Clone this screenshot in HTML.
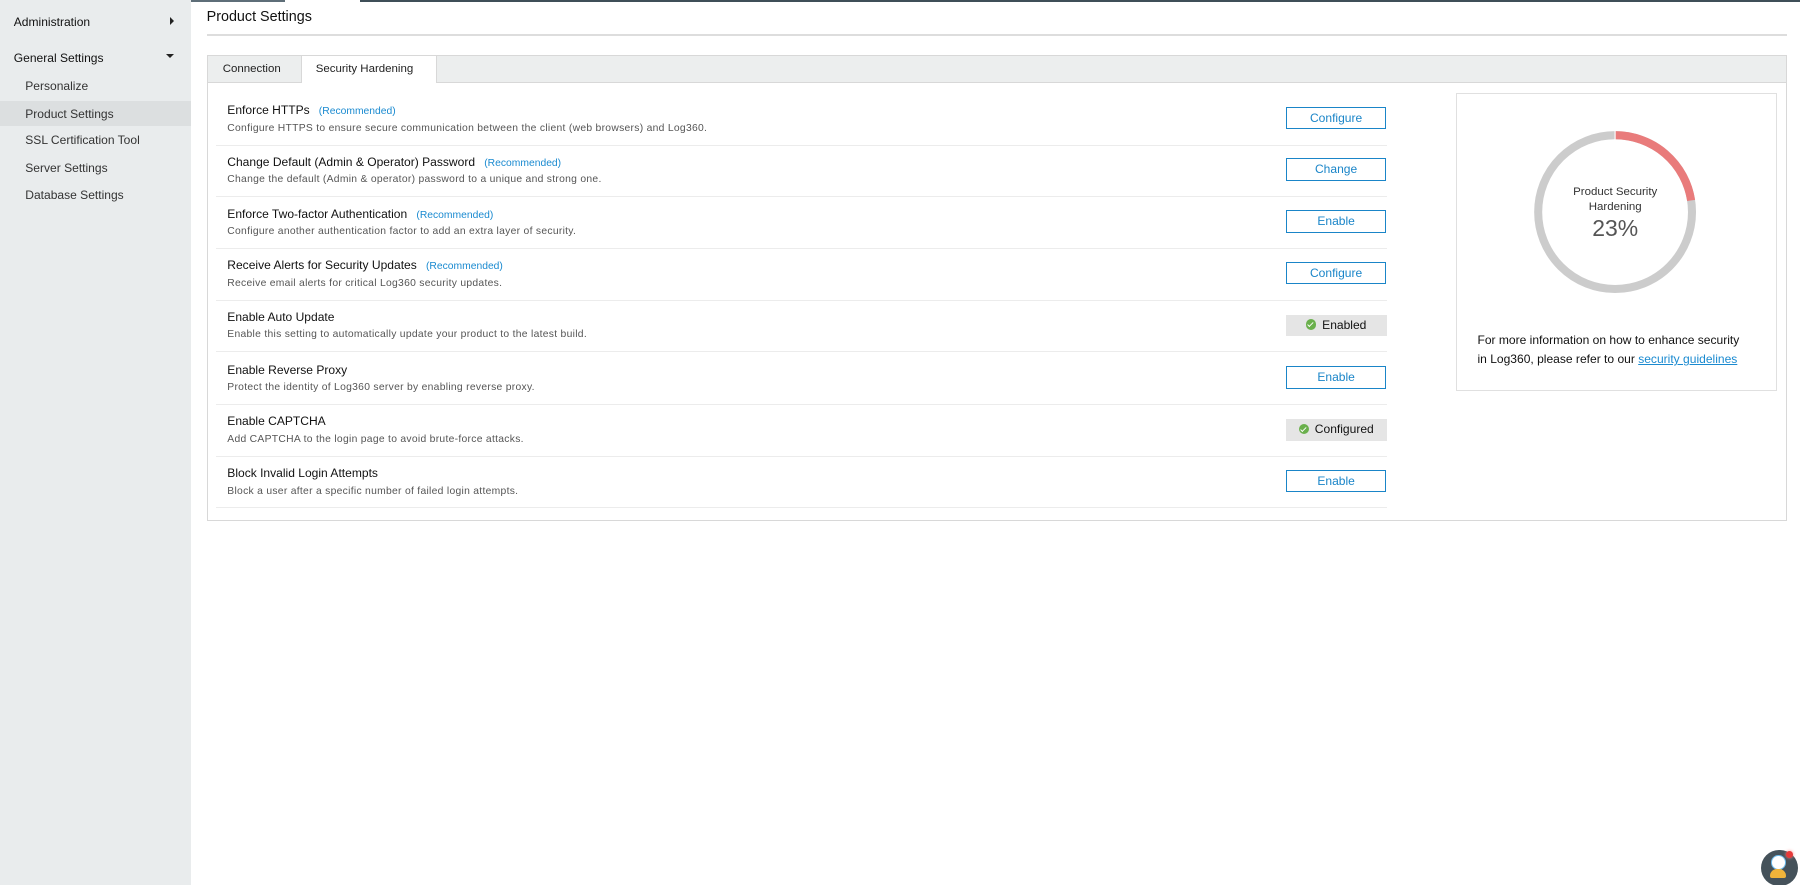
<!DOCTYPE html>
<html><head><meta charset="utf-8"><style>
html,body{margin:0;padding:0;overflow:hidden;background:#fff}
#root{zoom:1.148;width:1568px;height:771px;position:relative;font-family:"Liberation Sans",sans-serif;color:#222}
.a{position:absolute;white-space:nowrap}
.side{position:absolute;left:0;top:0;width:166px;height:771px;background:#e9eced}
.s1{font-size:10.5px;color:#111;left:12px}
.s2{font-size:10.5px;color:#333;left:22px}
.row{position:absolute;left:188px;width:1020px;height:45px;border-bottom:1px solid #ececec}
.t{position:absolute;left:10px;top:9px;font-size:10.5px;color:#111;white-space:nowrap}
.t span{color:#1a8ad0;font-size:9px;margin-left:8px}
.d{position:absolute;left:10px;top:26px;font-size:9px;color:#555;letter-spacing:.25px;white-space:nowrap}
.btn{position:absolute;left:932px;top:12px;width:86px;height:18px;border:1px solid #1a85c8;color:#1a85c8;font-size:10.5px;text-align:center;line-height:18px;background:#fff}
.st{position:absolute;left:932px;top:13px;width:88px;height:19px;background:#e5e5e5;font-size:10.5px;color:#111;text-align:center;line-height:19px}
.ck{display:inline-block;width:9px;height:9px;border-radius:50%;background:#6ab04c;vertical-align:-1px;margin-right:5px;position:relative}
.ck:after{content:"";position:absolute;left:2.5px;top:1.5px;width:2px;height:4px;border:solid #fff;border-width:0 1.3px 1.3px 0;transform:rotate(45deg)}
</style></head><body><div id="root">
<div class="a" style="left:0;top:0;width:248px;height:2px;background:#5e6e78"></div>
<div class="a" style="left:314px;top:0;width:1254px;height:2px;background:#3f4f58"></div>
<div class="side"></div>
<div class="a s1" style="top:13px">Administration</div>
<div class="a" style="left:148px;top:15px;width:0;height:0;border-left:4px solid #222;border-top:4px solid transparent;border-bottom:4px solid transparent"></div>
<div class="a s1" style="top:44px">General Settings</div>
<div class="a" style="left:145px;top:47px;width:0;height:0;border-top:4px solid #222;border-left:4px solid transparent;border-right:4px solid transparent"></div>
<div class="a s2" style="top:69px">Personalize</div>
<div class="a" style="left:0;top:88px;width:166px;height:22px;background:#dcdfe0"></div>
<div class="a s2" style="top:93px">Product Settings</div>
<div class="a s2" style="top:116px">SSL Certification Tool</div>
<div class="a s2" style="top:140px">Server Settings</div>
<div class="a s2" style="top:164px">Database Settings</div>

<div class="a" style="left:180px;top:8px;font-size:12.5px;color:#111">Product Settings</div>
<div class="a" style="left:180px;top:30px;width:1377px;height:1px;background:#ddd"></div>

<div class="a" style="left:180px;top:48px;width:1375px;height:404px;border:1px solid #d8d8d8"></div>
<div class="a" style="left:181px;top:49px;width:1375px;height:22px;background:#eceeee;border-bottom:1px solid #d8d8d8"></div>
<div class="a" style="left:194px;top:55px;font-size:10px;color:#222">Connection</div>
<div class="a" style="left:262px;top:49px;width:117px;height:23px;background:#fff;border-left:1px solid #d8d8d8;border-right:1px solid #d8d8d8"></div>
<div class="a" style="left:275px;top:55px;font-size:10px;color:#222">Security Hardening</div>

<div class="row" style="top:81px"><div class="t">Enforce HTTPs<span>(Recommended)</span></div><div class="d">Configure HTTPS to ensure secure communication between the client (web browsers) and Log360.</div><div class="btn">Configure</div></div>
<div class="row" style="top:126px"><div class="t">Change Default (Admin &amp; Operator) Password<span>(Recommended)</span></div><div class="d">Change the default (Admin &amp; operator) password to a unique and strong one.</div><div class="btn">Change</div></div>
<div class="row" style="top:171px"><div class="t">Enforce Two-factor Authentication<span>(Recommended)</span></div><div class="d">Configure another authentication factor to add an extra layer of security.</div><div class="btn">Enable</div></div>
<div class="row" style="top:216px"><div class="t">Receive Alerts for Security Updates<span>(Recommended)</span></div><div class="d">Receive email alerts for critical Log360 security updates.</div><div class="btn">Configure</div></div>
<div class="row" style="top:261px"><div class="t">Enable Auto Update</div><div class="d">Enable this setting to automatically update your product to the latest build.</div><div class="st"><span class="ck"></span>Enabled</div></div>
<div class="row" style="top:307px"><div class="t">Enable Reverse Proxy</div><div class="d">Protect the identity of Log360 server by enabling reverse proxy.</div><div class="btn">Enable</div></div>
<div class="row" style="top:352px"><div class="t">Enable CAPTCHA</div><div class="d">Add CAPTCHA to the login page to avoid brute-force attacks.</div><div class="st"><span class="ck"></span>Configured</div></div>
<div class="row" style="top:397px"><div class="t">Block Invalid Login Attempts</div><div class="d">Block a user after a specific number of failed login attempts.</div><div class="btn">Enable</div></div>

<div class="a" style="left:1268px;top:81px;width:278px;height:258px;border:1px solid #e0e0e0"></div>
<svg class="a" style="left:1332px;top:110px" width="150" height="150" viewBox="0 0 150 150">
<circle cx="75" cy="75" r="67" fill="none" stroke="#cccccc" stroke-width="7"/>
<circle cx="75" cy="75" r="67" fill="none" stroke="#e97b7b" stroke-width="7" stroke-dasharray="95 400" transform="rotate(-90 75 75)"/>
<line x1="75" y1="4" x2="75" y2="12" stroke="#fff" stroke-width="1"/>
</svg>
<div class="a" style="left:1332px;top:161px;width:150px;text-align:center;font-size:10px;color:#333;white-space:normal;line-height:13px">Product Security<br>Hardening</div>
<div class="a" style="left:1332px;top:187px;width:150px;text-align:center;font-size:20px;color:#555">23%</div>
<div class="a" style="left:1287px;top:288px;font-size:10.5px;color:#111;line-height:17px">For more information on how to enhance security<br>in Log360, please refer to our <span style="color:#1a8ad0;text-decoration:underline">security guidelines</span></div>

<div class="a" style="left:1534px;top:740px;width:32px;height:32px;border-radius:50%;background:#45525a"></div>
<div class="a" style="left:1543px;top:745px;width:11px;height:11px;border-radius:50%;border:1px solid #6ab8e8;background:#fff"></div>
<div class="a" style="left:1542px;top:757px;width:14px;height:8px;border-radius:7px 7px 2px 2px;background:#f0b43a"></div>
<div class="a" style="left:1556px;top:741px;width:6px;height:6px;border-radius:50%;background:#e63a3a;box-shadow:0 0 3px #f88"></div>
</div></body></html>
